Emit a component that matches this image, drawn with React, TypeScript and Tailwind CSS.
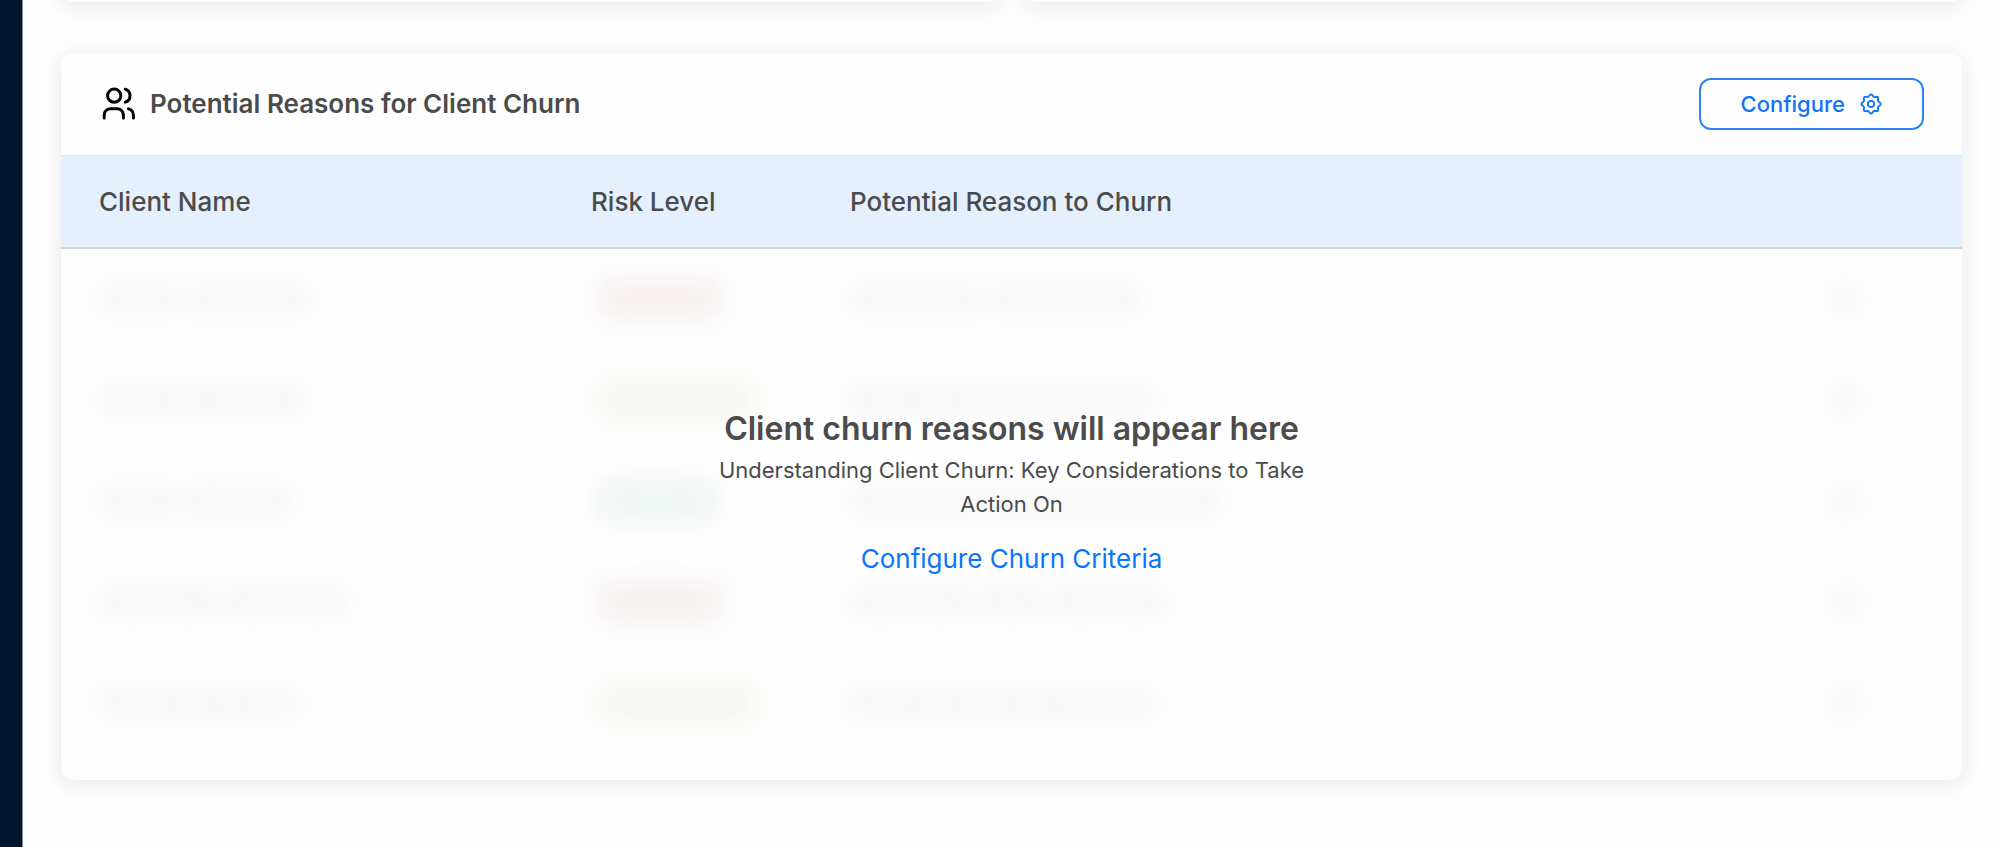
import React from "react";

type Risk = "high" | "medium" | "low";

interface ChurnRow {
  name: string[];
  risk: Risk;
  reason: string[];
}

const ROWS: ChurnRow[] = [
  { name: ["w-[80px]", "w-[124px]"], risk: "high", reason: ["w-[132px]", "w-[150px]"] },
  { name: ["w-[80px]", "w-[116px]"], risk: "medium", reason: ["w-[80px]", "w-[216px]"] },
  { name: ["w-[76px]", "w-[108px]"], risk: "low", reason: ["w-[132px]", "w-[230px]"] },
  { name: ["w-[116px]", "w-[124px]"], risk: "high", reason: ["w-[120px]", "w-[64px]", "w-[116px]"] },
  { name: ["w-[88px]", "w-[64px]", "w-[32px]"], risk: "medium", reason: ["w-[80px]", "w-[92px]", "w-[116px]"] },
];

const PILLS: Record<Risk, string> = {
  high: "w-[124px] bg-[#f5eded]",
  medium: "w-[160px] bg-[#f6f5ee]",
  low: "w-[118px] bg-[#ecf4f0]",
};

function UsersIcon() {
  return (
    <svg className="size-9" viewBox="0 0 36 36" fill="none" stroke="#000" strokeWidth="3" strokeLinecap="round" aria-hidden="true">
      <circle cx="14.2" cy="9.7" r="6.6" />
      <path d="M4.200 32v-3a6.300 6.300 0 0 1 6.300-6.300h6.600a6.300 6.300 0 0 1 6.300 6.300v3" />
      <path d="M25.300 3.200a6.850 6.850 0 0 1 0 13" />
      <path d="M28.500 22.900a6.500 6.500 0 0 1 4.900 6.200V32" />
    </svg>
  );
}

/* Outline with eight evenly spaced rounded teeth. */
const GEAR_PATH =
  Array.from({ length: 96 }, (_, i) => {
    const angle = (i / 96) * Math.PI * 2;
    const radius = 9.4 + 1.1 * Math.cos(8 * angle);
    const x = (12 + radius * Math.sin(angle)).toFixed(2);
    const y = (12 - radius * Math.cos(angle)).toFixed(2);
    return `${i === 0 ? "M" : "L"}${x} ${y}`;
  }).join("") + "Z";

function GearIcon() {
  return (
    <svg className="size-[22px]" viewBox="0 0 24 24" fill="none" stroke="currentColor" strokeWidth="2" strokeLinejoin="round" aria-hidden="true">
      <path d={GEAR_PATH} />
      <circle cx="12" cy="12" r="3.400" />
    </svg>
  );
}

function Words({ widths }: { widths: string[] }) {
  return (
    <div className="flex gap-2 blur-[14px]">
      {widths.map((w, i) => (
        <span key={i} className={`h-5 ${w} bg-[#f4f4f4]`} />
      ))}
    </div>
  );
}

export default function App() {
  return (
    <div className="flex min-h-screen bg-[#fefefe] font-['Inter',sans-serif] text-[#4b4b4b]">
      <aside className="w-[23px] shrink-0 border-r border-[#7f8a95] bg-[#00152b]" />
      <main className="min-w-0 flex-1 overflow-hidden pr-[37px] pl-[38px]">
        <div className="-mt-[98px] grid grid-cols-2 gap-6">
          <div className="h-[100px] rounded-xl bg-white shadow-[0_4px_24px_rgba(0,0,0,0.09)]" />
          <div className="h-[100px] rounded-xl bg-white shadow-[0_4px_24px_rgba(0,0,0,0.09)]" />
        </div>

        <section className="mt-[51px] overflow-hidden rounded-xl bg-[#fefefe] shadow-[0_4px_24px_rgba(0,0,0,0.09)]">
          <header className="flex h-[103px] items-center justify-between border-b border-[#e3e5e8] pr-[38px] pl-[39px]">
            <div className="flex items-center gap-3.5">
              <UsersIcon />
              <h2 className="text-[26px] leading-9 font-semibold">Potential Reasons for Client Churn</h2>
            </div>
            <button type="button" className="flex h-[52px] items-center gap-[15px] rounded-xl border-2 border-[#2b84f7] px-10 text-[22px] font-medium text-[#0f74f5]">
              Configure
              <GearIcon />
            </button>
          </header>

          <div className="relative">
            <table className="w-full table-fixed border-collapse text-left">
              <thead>
                <tr className="h-[92px] border-b-2 border-[#d3d3d5] bg-[#e4f0fd] text-[26px] leading-8">
                  <th className="w-[492px] pl-[38px] font-medium">Client Name</th>
                  <th className="w-[259px] pl-[38px] font-medium">Risk Level</th>
                  <th className="pl-[38px] font-medium">Potential Reason to Churn</th>
                  <th className="w-[154px]" aria-label="Actions" />
                </tr>
              </thead>
              <tbody aria-hidden="true">
                {ROWS.map((row, i) => (
                  <tr key={i} className="h-[101px]">
                    <td className="pl-[38px]"><Words widths={row.name} /></td>
                    <td className="pl-[45px]"><div className={`h-9 rounded-xl blur-[14px] ${PILLS[row.risk]}`} /></td>
                    <td className="pl-[38px]"><Words widths={row.reason} /></td>
                    <td className="pl-6"><div className="size-7 rounded-full bg-[#f5f5f5] blur-[12px]" /></td>
                  </tr>
                ))}
              </tbody>
            </table>
            <div className="h-[27px] border-t border-[#fcfcfc]" />

            <div className="absolute inset-x-0 top-[92px] bottom-0 flex flex-col items-center justify-center pb-[42px] text-center">
              <h3 className="text-[32px] leading-10 font-semibold">Client churn reasons will appear here</h3>
              <p className="mt-1 w-[640px] text-[22px] leading-[34px]">Understanding Client Churn: Key Considerations to Take Action On</p>
              <a href="#configure" className="mt-5 text-[26px] leading-9 text-[#0a75f8]">Configure Churn Criteria</a>
            </div>
          </div>
        </section>
      </main>
    </div>
  );
}
